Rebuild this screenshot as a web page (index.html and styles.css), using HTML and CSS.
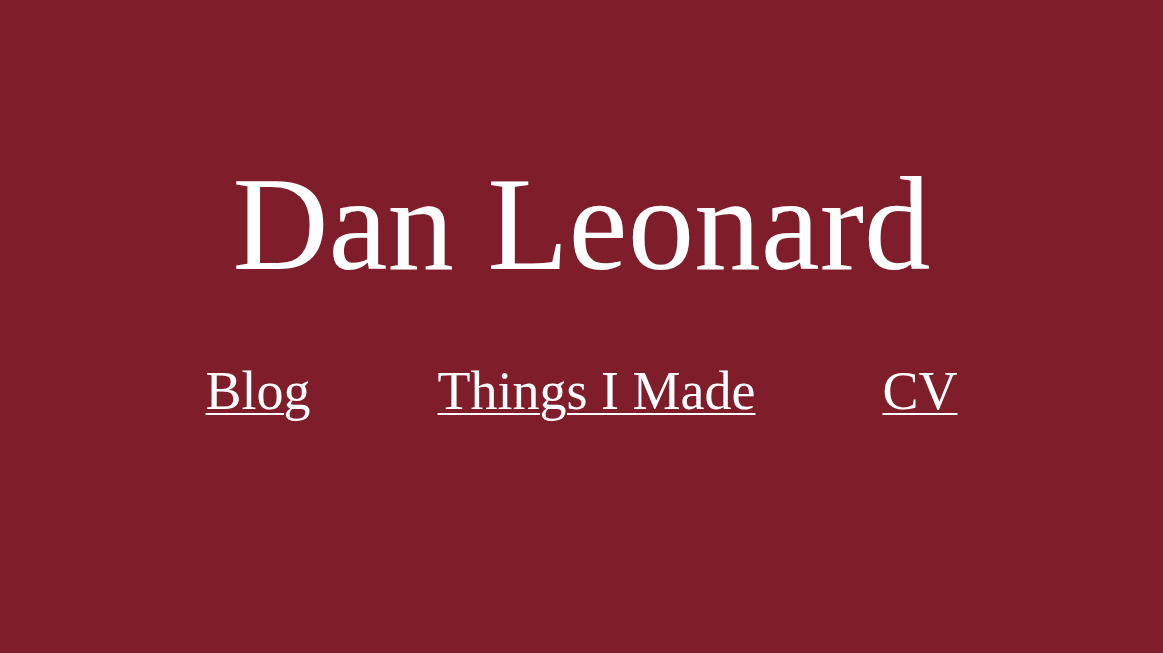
FILE: index.html
```html
<!DOCTYPE html>
<html lang="en">
<head>
<meta charset="utf-8">
<title>Dan Leonard</title>
<link rel="stylesheet" href="styles.css">
</head>
<body>
<main class="page">
  <h1 class="title">Dan Leonard</h1>
  <nav class="nav">
    <a class="nav-link" href="#">Blog</a>
    <a class="nav-link" href="#">Things I Made</a>
    <a class="nav-link" href="#">CV</a>
  </nav>
</main>
</body>
</html>
```
FILE: styles.css
```css
html, body {
  margin: 0;
  padding: 0;
  background: #7f1d2a;
  height: 100%;
}
.page {
  display: flex;
  flex-direction: column;
  align-items: center;
  padding-top: 158px;
  font-family: "Liberation Serif", "DejaVu Serif", serif;
  color: #ffffff;
}
.title {
  margin: 0;
  font-size: 133px;
  font-weight: normal;
  line-height: 1;
}
.nav {
  display: flex;
  justify-content: center;
  gap: 127px;
  margin-top: 73px;
}
.nav-link {
  color: #ffffff;
  font-size: 54px;
  line-height: 1;
  text-decoration: underline;
  text-decoration-thickness: 2px;
  text-underline-offset: 4px;
}
```
